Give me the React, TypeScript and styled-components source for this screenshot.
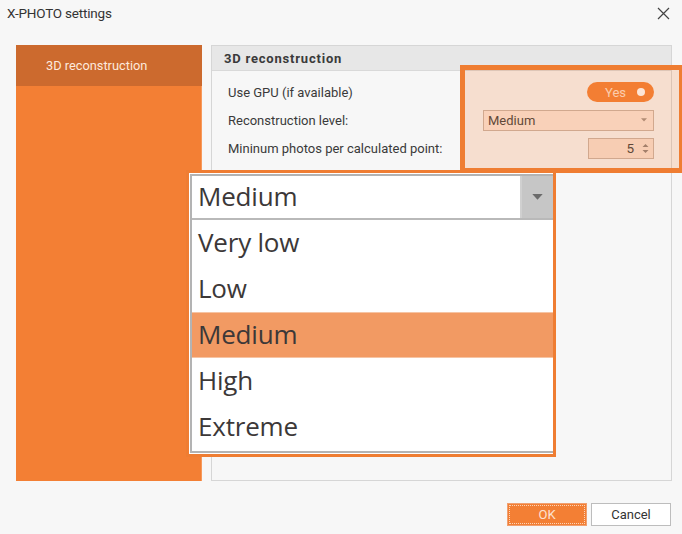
import React from "react";
import styled, { createGlobalStyle } from "styled-components";

const GlobalStyle = createGlobalStyle`
  html, body {
    margin: 0;
    padding: 0;
    background: #f7f7f7;
  }
  body {
    font-family: Roboto, "Liberation Sans", sans-serif;
    color: #333333;
  }
`;

const orange = "#f37f34";
const levels = ["Very low", "Low", "Medium", "High", "Extreme"];

const Window = styled.div`
  position: relative;
  width: 682px;
  height: 534px;
  background: #f7f7f7;
  display: flex;
  flex-direction: column;
  overflow: hidden;
`;

const TitleBar = styled.div`
  height: 25px;
  padding: 0 12px 0 7px;
  display: flex;
  align-items: center;
  justify-content: space-between;
  font-size: 13.5px;
  color: #333;
  letter-spacing: -0.2px;
`;

const CloseButton = styled.svg`
  width: 13px;
  height: 13px;
  margin-top: 1px;
`;

const Body = styled.div`
  display: flex;
  gap: 9px;
  padding: 20px 10px 0 16px;
  height: 436px;
`;

const Sidebar = styled.div`
  width: 186px;
  background: ${orange};
  box-shadow: inset -1px 0 0 #f79a5c;
  display: flex;
  flex-direction: column;
`;

const NavItem = styled.div<{ $active?: boolean }>`
  height: 41px;
  padding-left: 30px;
  display: flex;
  align-items: center;
  font-size: 12.8px;
  color: #fde9dc;
  background: ${(p) => (p.$active ? "#cc6a2e" : "transparent")};
`;

const Panel = styled.div`
  flex: 1;
  border: 1px solid #d6d6d6;
  display: flex;
  flex-direction: column;
`;

const PanelHeader = styled.div`
  height: 24px;
  background: #e7e7e7;
  border-bottom: 1px solid #d9d9d9;
  padding-left: 12px;
  display: flex;
  align-items: center;
  font-size: 13px;
  font-weight: 700;
  color: #3a3a3a;
  letter-spacing: 0.8px;
`;

const Rows = styled.div`
  padding: 7px 17px 0 16px;
  display: flex;
  flex-direction: column;
`;

const Row = styled.div`
  height: 28px;
  display: flex;
  align-items: center;
  justify-content: space-between;
  font-size: 13px;
  color: #3a3a3a;
`;

const Toggle = styled.div`
  width: 67px;
  height: 20px;
  border-radius: 10px;
  background: ${orange};
  display: flex;
  align-items: center;
  justify-content: flex-end;
  gap: 11px;
  padding-right: 9px;
  box-sizing: border-box;
  color: #fde0cc;
  font-size: 13px;
`;

const Dot = styled.span`
  width: 8px;
  height: 8px;
  border-radius: 50%;
  background: #ffffff;
`;

const SmallSelect = styled.div`
  width: 171px;
  height: 21px;
  box-sizing: border-box;
  border: 1px solid #c8b3a6;
  background: #fbe7db;
  display: flex;
  align-items: center;
  justify-content: space-between;
  padding: 0 6px 0 4px;
  font-size: 13px;
  color: #3a3a3a;
`;

const Spinner = styled.div`
  width: 66px;
  height: 21px;
  box-sizing: border-box;
  border: 1px solid #c8b3a6;
  background: #f8e1d4;
  display: flex;
  align-items: center;
  justify-content: flex-end;
  gap: 8px;
  padding-right: 4px;
  font-size: 13.5px;
  color: #3a3a3a;
`;

const SpinArrows = styled.svg`
  width: 7px;
  height: 13px;
`;

const Footer = styled.div`
  flex: 1;
  display: flex;
  justify-content: flex-end;
  align-items: flex-start;
  gap: 4px;
  padding: 22px 11px 0 0;
`;

const Button = styled.div<{ $primary?: boolean }>`
  width: 80px;
  height: 23px;
  box-sizing: border-box;
  display: flex;
  align-items: center;
  justify-content: center;
  font-size: 13px;
  background: ${(p) => (p.$primary ? orange : "#ffffff")};
  color: ${(p) => (p.$primary ? "#fde2d0" : "#333")};
  border: 1px solid ${(p) => (p.$primary ? "#f0a070" : "#bdbdbd")};
  outline: ${(p) => (p.$primary ? "1px dotted #fbd3b8" : "none")};
  outline-offset: -3px;
`;

/* highlight frame laid over the right-hand controls */
const Highlight = styled.div`
  position: absolute;
  left: 460px;
  top: 65px;
  width: 224px;
  height: 108px;
  box-sizing: border-box;
  border: 5px solid #ef7d32;
  background: rgba(243, 127, 52, 0.2);
`;

/* enlarged open dropdown laid over the panel */
const Popup = styled.div`
  position: absolute;
  left: 186px;
  top: 170px;
  width: 370px;
  height: 287px;
  box-sizing: border-box;
  border: 3px solid #ef7d32;
  background: #ffffff;
  padding: 1px 0 1px 1px;
`;

const PopupInner = styled.div`
  height: 100%;
  box-sizing: border-box;
  border: 2px solid #b3b3b3;
  border-right: none;
  display: flex;
  flex-direction: column;
  font-family: "Open Sans", "Noto Sans", sans-serif;
  font-size: 26px;
  letter-spacing: -0.2px;
  color: #3c3838;
`;

const PopupHead = styled.div`
  height: 42px;
  display: flex;
  border-bottom: 2px solid #b9b9b9;
`;

const HeadValue = styled.div`
  flex: 1;
  display: flex;
  align-items: center;
  padding: 0 0 3px 6px;
  border-right: 2px solid #d0d0d0;
`;

const HeadButton = styled.div`
  width: 31px;
  background: #c6c6c6;
  display: flex;
  align-items: center;
  justify-content: center;
`;

const Option = styled.div<{ $selected?: boolean }>`
  height: 46px;
  display: flex;
  align-items: center;
  padding: 0 0 3px 6px;
  background: ${(p) => (p.$selected ? "#f29a63" : "transparent")};
  border-top: 1px solid ${(p) => (p.$selected ? "#f6c4a4" : "transparent")};
  border-bottom: 1px solid ${(p) => (p.$selected ? "#f6c4a4" : "transparent")};
  box-sizing: border-box;
`;

const Caret = ({ size = 7, color = "#8a8a8a" }: { size?: number; color?: string }) => (
  <svg width={size} height={size / 2 + 1} viewBox="0 0 8 5">
    <path d="M0 0 H8 L4 4.5 Z" fill={color} />
  </svg>
);

const App = () => {
  return (
    <Window>
      <GlobalStyle />
      <TitleBar>
        <span>X-PHOTO settings</span>
        <CloseButton viewBox="0 0 13 13">
          <path d="M1 1 L12 12 M12 1 L1 12" stroke="#444" strokeWidth="1.2" />
        </CloseButton>
      </TitleBar>

      <Body>
        <Sidebar>
          <NavItem $active>3D reconstruction</NavItem>
        </Sidebar>
        <Panel>
          <PanelHeader>3D reconstruction</PanelHeader>
          <Rows>
            <Row>
              <span>Use GPU (if available)</span>
              <Toggle>
                <span>Yes</span>
                <Dot />
              </Toggle>
            </Row>
            <Row>
              <span>Reconstruction level:</span>
              <SmallSelect>
                <span>Medium</span>
                <Caret size={6} color="#a08f85" />
              </SmallSelect>
            </Row>
            <Row>
              <span>Mininum photos per calculated point:</span>
              <Spinner>
                <span>5</span>
                <SpinArrows viewBox="0 0 7 13">
                  <path d="M0.5 5 L3.5 2 L6.5 5 Z M0.5 8 L3.5 11 L6.5 8 Z" fill="#8f8079" />
                </SpinArrows>
              </Spinner>
            </Row>
          </Rows>
        </Panel>
      </Body>

      <Footer>
        <Button $primary>OK</Button>
        <Button>Cancel</Button>
      </Footer>

      <Highlight />

      <Popup>
        <PopupInner>
          <PopupHead>
            <HeadValue>Medium</HeadValue>
            <HeadButton>
              <Caret size={11} color="#6b6b6b" />
            </HeadButton>
          </PopupHead>
          {levels.map((level) => (
            <Option key={level} $selected={level === "Medium"}>
              {level}
            </Option>
          ))}
        </PopupInner>
      </Popup>
    </Window>
  );
};

export default App;
